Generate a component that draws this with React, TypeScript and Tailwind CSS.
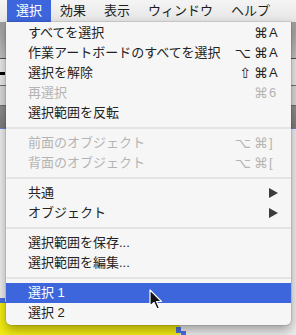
const FONT = "font-['Liberation_Sans','Noto_Sans_CJK_JP',sans-serif]"

type Item =
  | { kind: 'sep' }
  | {
      kind: 'item'
      label: string
      mods?: string[]
      keyChar?: string
      disabled?: boolean
      submenu?: boolean
      active?: boolean
    }

const items: Item[] = [
  { kind: 'item', label: 'すべてを選択', mods: ['⌘'], keyChar: 'A' },
  { kind: 'item', label: '作業アートボードのすべてを選択', mods: ['⌥', '⌘'], keyChar: 'A' },
  { kind: 'item', label: '選択を解除', mods: ['⇧', '⌘'], keyChar: 'A' },
  { kind: 'item', label: '再選択', mods: ['⌘'], keyChar: '6', disabled: true },
  { kind: 'item', label: '選択範囲を反転' },
  { kind: 'sep' },
  { kind: 'item', label: '前面のオブジェクト', mods: ['⌥', '⌘'], keyChar: ']', disabled: true },
  { kind: 'item', label: '背面のオブジェクト', mods: ['⌥', '⌘'], keyChar: '[', disabled: true },
  { kind: 'sep' },
  { kind: 'item', label: '共通', submenu: true },
  { kind: 'item', label: 'オブジェクト', submenu: true },
  { kind: 'sep' },
  { kind: 'item', label: '選択範囲を保存...' },
  { kind: 'item', label: '選択範囲を編集...' },
  { kind: 'sep' },
  { kind: 'item', label: '選択 1', active: true },
  { kind: 'item', label: '選択 2' },
]

const menus = ['選択', '効果', '表示', 'ウィンドウ', 'ヘルプ']

function MenuBar() {
  return (
    <div className="flex h-[22px] items-stretch bg-gradient-to-b from-[#f4f4f4] to-[#e6e6e6] pl-[7px] text-[13px] text-[#1c1c1c]">
      {menus.map((m, i) => (
        <div
          key={m}
          className={`flex items-center px-[9px] ${i === 0 ? 'bg-[#3d66dc] text-white' : ''}`}
        >
          {m}
        </div>
      ))}
    </div>
  )
}

// the Illustrator window peeking out behind the menu
function Backdrop() {
  return (
    <div className="flex h-[313px] flex-col">
      <div className="h-[36px] bg-gradient-to-b from-[#9c9c9c] to-[#c2c2c2]" />
      <div className="h-px bg-[#4f4f4f]" />
      <div className="flex h-[26px] items-center bg-[#e9e9e9]">
        <div className="mt-[2px] h-[3px] w-[5px] bg-black" />
      </div>
      <div className="h-px bg-[#6f6f6f]" />
      <div className="h-[19px] bg-[#d9d9d9]" />
      <div className="h-px bg-[#6f6f6f]" />
      <div className="h-[22px] bg-gradient-to-b from-[#8e8e8e] to-[#7c7c7c]" />
      <div className="h-px bg-[#6d80c4]" />
      <div className="relative flex-1 bg-[#ededed]">
        {/* yellow object with selection handles */}
        <div className="absolute left-[-10px] top-[173px] h-[60px] w-[190px] border-t border-[#4a6fe0] bg-[#f3ec12]" />
        <div className="absolute left-0 top-[169px] h-[5px] w-[5px] bg-[#4a6fe0]" />
        <div className="absolute left-[176px] top-[198px] h-[6px] w-[5px] bg-[#4a6fe0]" />
        <div className="absolute left-[181px] top-[202px] h-[5px] w-[5px] bg-[#4a6fe0]" />
      </div>
    </div>
  )
}

function Row({ item }: { item: Extract<Item, { kind: 'item' }> }) {
  const color = item.active
    ? 'bg-[#3d66dc] text-white'
    : item.disabled
      ? 'text-[#b4b4b4]'
      : 'text-[#232323]'
  return (
    <div className={`flex h-[20px] items-center pl-[22px] pr-[12px] text-[13px] ${color}`}>
      <span className="flex-1 whitespace-nowrap">{item.label}</span>
      {item.keyChar && (
        <span className="flex items-center gap-[1px] font-['Liberation_Sans','DejaVu_Sans',sans-serif]">
          <span className="flex gap-[3px] text-[14px]">
            {item.mods?.map((m) => (
              <span key={m}>{m}</span>
            ))}
          </span>
          <span className="w-[10px] text-left text-[13px]">{item.keyChar}</span>
        </span>
      )}
      {item.submenu && (
        <svg width="9" height="10" viewBox="0 0 9 10" className="mr-[1px]">
          <polygon points="0,0 9,5 0,10" fill="#3c3c3c" />
        </svg>
      )}
    </div>
  )
}

function Dropdown() {
  return (
    <div className="absolute left-[6px] top-[22px] w-[285px] rounded-b-[5px] bg-[#f6f6f6] pb-[2px] pt-[1px] shadow-[0_0_0_0.5px_rgba(0,0,0,0.18),0_5px_12px_rgba(0,0,0,0.35)]">
      {items.map((it, i) =>
        it.kind === 'sep' ? (
          <div key={i} className="flex h-[10px] items-center">
            <div className="h-[2px] w-full bg-[#e4e4e4]" />
          </div>
        ) : (
          <Row key={i} item={it} />
        ),
      )}
    </div>
  )
}

function Cursor() {
  return (
    <svg
      width="14"
      height="22"
      viewBox="0 0 14 22"
      className="absolute left-[149px] top-[289px]"
    >
      <path
        d="M1 1 L1 17 L5 13.5 L8 20 L10.5 19 L7.5 12.5 L12.5 12.5 Z"
        fill="#111"
        stroke="#fff"
        strokeWidth="1.2"
        strokeLinejoin="round"
      />
    </svg>
  )
}

export default function App() {
  return (
    <div className={`relative h-[335px] w-[296px] overflow-hidden bg-[#ededed] ${FONT}`}>
      <MenuBar />
      <Backdrop />
      <Dropdown />
      <Cursor />
    </div>
  )
}
